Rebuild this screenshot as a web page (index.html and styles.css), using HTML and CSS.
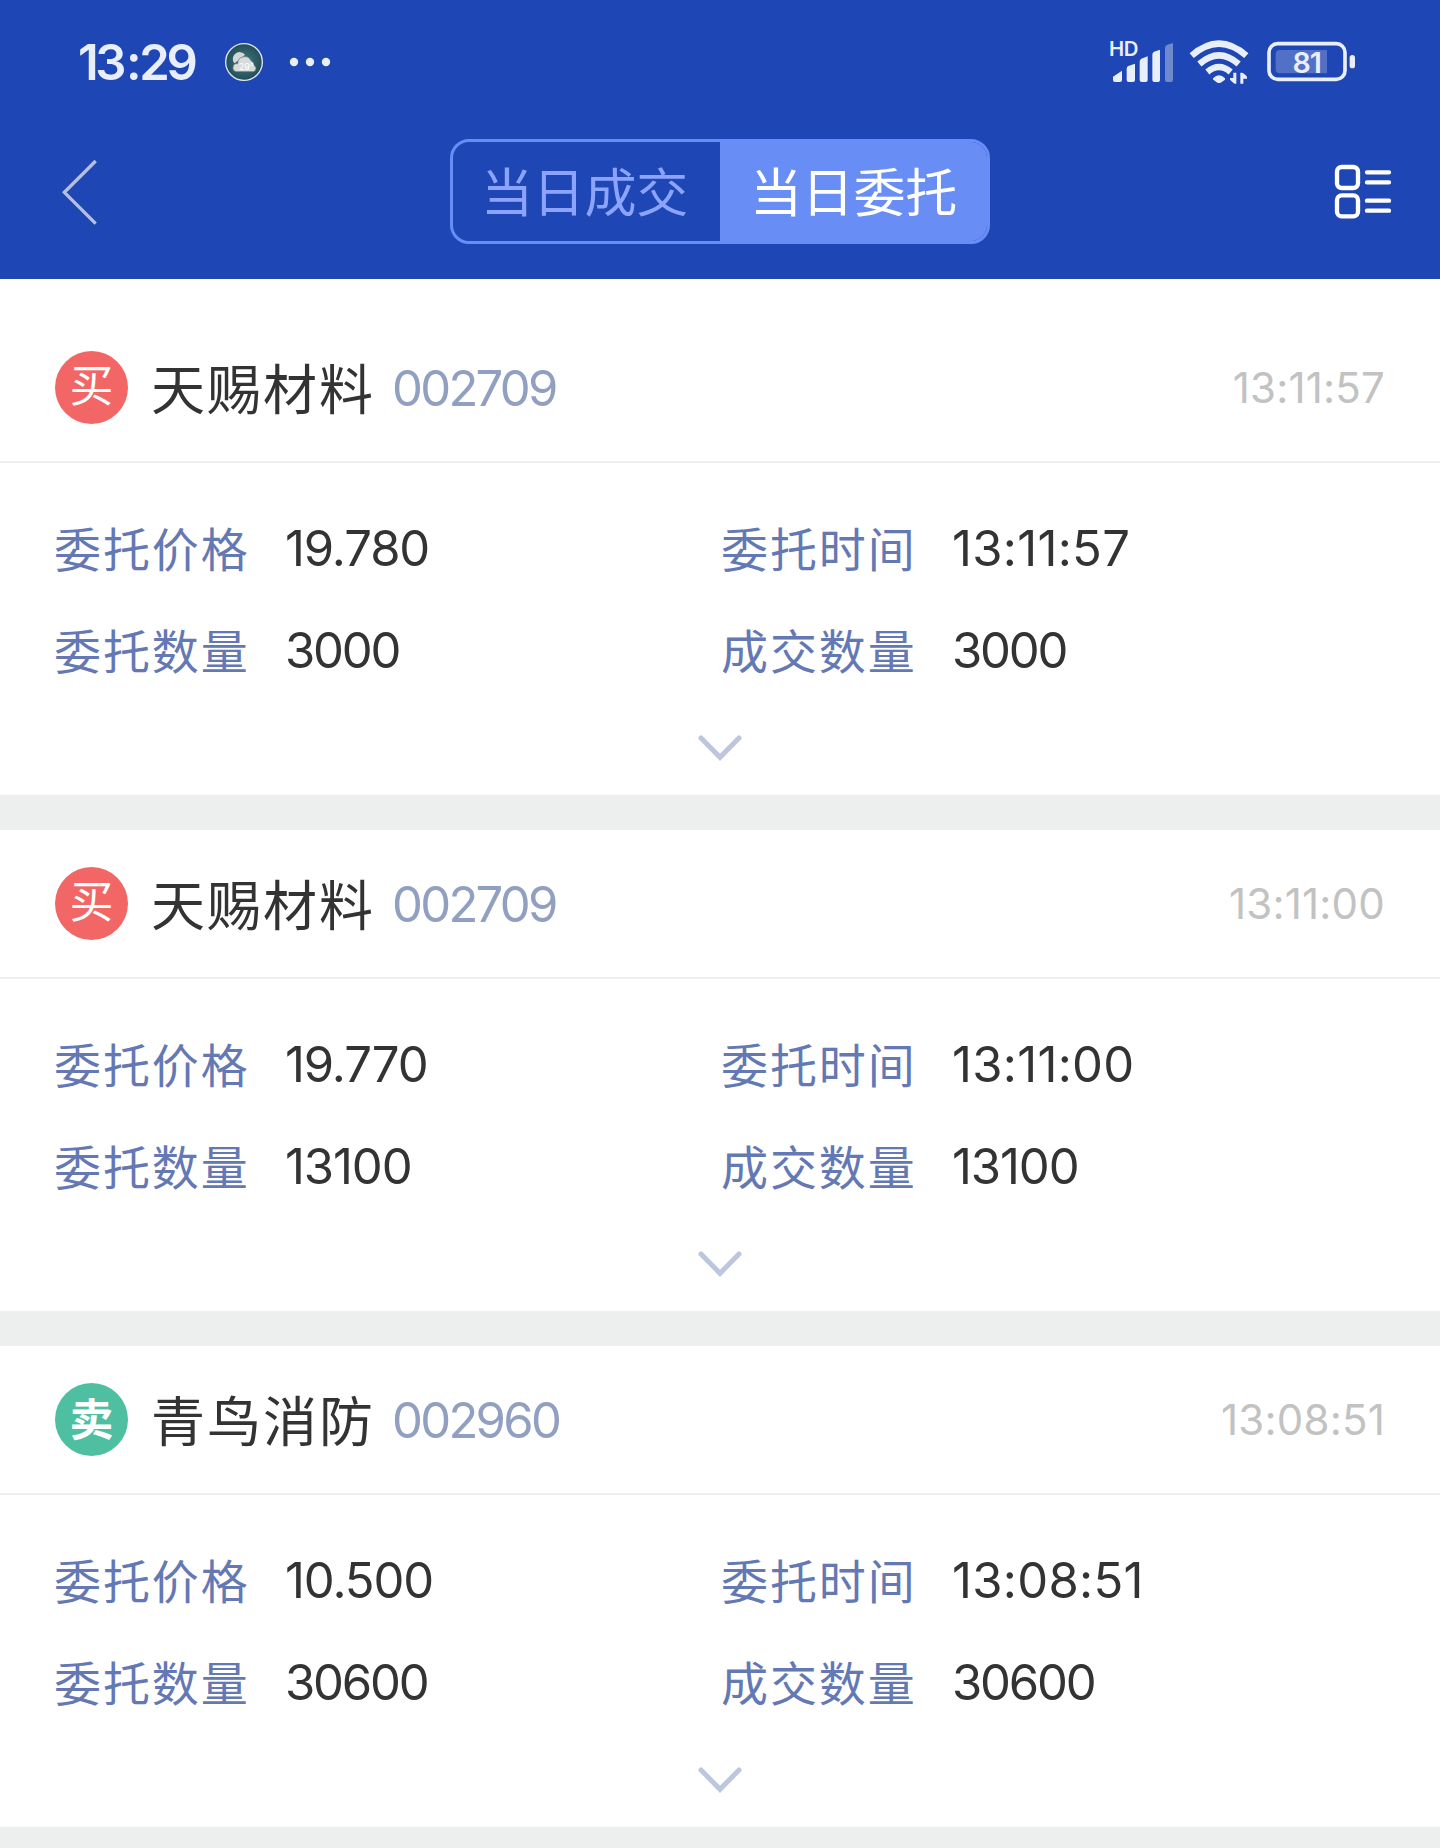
FILE: index.html
```
<!DOCTYPE html>
<html lang="zh-CN">

<head>
    <meta charset="UTF-8">
    <meta name="viewport" content="width=device-width, initial-scale=1.0">
    <title>当日委托</title>
    <link rel="stylesheet" href="styles.css">
</head>

<body>
    <header class="header">
        <!-- Status Bar -->
        <div class="status-bar">
            <div class="status-left">
                <span class="clock">13<span class="colon">:</span>29</span>
                <svg class="weather" viewBox="0 0 120 120">
                    <defs>
                        <radialGradient id="sky">
                            <stop offset="0" stop-color="#47787c" />
                            <stop offset="1" stop-color="#234e58" />
                        </radialGradient>
                    </defs>
                    <circle cx="60" cy="60" r="55" fill="url(#sky)" stroke="#dfe6ee" stroke-width="4" />
                    <path d="M31 64a18 18 0 1 1 32-26l-12 12z" fill="#d5d8d8" />
                    <path d="M37 89a12 12 0 0 1 4-24a21 21 0 0 1 40-9a15 15 0 0 1 9 14a10 10 0 0 1-2 19z" fill="#d9dbdb" stroke="#4c7377" stroke-width="2" />
                    <text x="44" y="85" class="weather-temp">29°</text>
                </svg>
                <svg class="dots" viewBox="0 0 132 30" fill="#e9eefb">
                    <circle cx="18" cy="15" r="12.5" />
                    <circle cx="66" cy="15" r="12.5" />
                    <circle cx="114" cy="15" r="12.5" />
                </svg>
            </div>
            <svg class="status-icons" viewBox="0 0 870 270" fill="#e9eefb">
                <!-- Signal -->
                <text x="57" y="108" class="hd">HD</text>
                <path d="M69 170l27-18v28q0 6-6 6H75q-6 0-6-6z" />
                <path d="M110 146q0-6 5-8l20-7v49q0 6-6 6h-13q-6 0-6-6z" />
                <path d="M149 125q0-6 5-9l19-7v71q0 6-6 6h-12q-6 0-6-6z" />
                <path d="M187 104q0-6 5-9l18-6v91q0 6-6 6h-11q-6 0-6-6z" />
                <path d="M225 84q0-6 5-9l19-6v111q0 6-6 6h-12q-6 0-6-6z" opacity=".4" />
                <!-- Wifi -->
                <g fill="none" stroke="#e9eefb" stroke-width="19">
                    <path d="M305 107q82-72 164 0" />
                    <path d="M328 132q59-52 118 0" />
                    <path d="M352 156q35-30 70 0" />
                </g>
                <path d="M369 175q18-18 36 0q1 3-1 5l-12 8q-5 2-10 0l-12-9q-2-2-1-4z" />
                <path d="M430 158l9 0v33h-5q-8-5-14-12v-5h10zM451 191V158h6q9 5 14 12v6h-11v15z" />
                <!-- Battery -->
                <rect x="537" y="71" width="228" height="107" rx="26" fill="none" stroke="#e9eefb" stroke-width="11" />
                <path d="M570 90h141v70H570q-13 0-13-13v-44q0-13 13-13z" opacity=".26" />
                <rect x="779" y="105" width="16" height="40" rx="8" />
                <text x="650" y="158" class="battery-level">81</text>
            </svg>
        </div>

        <!-- Navigation -->
        <div class="nav">
            <svg class="back" viewBox="60 51 120 210">
                <path d="M167 63L73 157L167 251" fill="none" stroke="#b4bfe2" stroke-width="10" />
            </svg>
            <div class="tabs">
                <div class="tab">当日成交</div>
                <div class="tab active">当日委托</div>
            </div>
            <svg class="menu" viewBox="72 72 174 165" fill="none" stroke="#fff" stroke-linecap="round">
                <rect x="81" y="81" width="63" height="63" rx="14" stroke-width="13" />
                <rect x="81" y="166" width="63" height="63" rx="14" stroke-width="13" />
                <path d="M171 97h66M171 127h66M171 182h66M171 212h66" stroke-width="13" />
            </svg>
        </div>
    </header>

    <!-- Order List -->
    <main class="orders">
        <section class="order">
            <div class="order-head">
                <span class="badge buy">买</span>
                <span class="name">天赐材料</span>
                <span class="code">002709</span>
                <span class="time">13:11:57</span>
            </div>
            <div class="order-body">
                <div class="field"><span class="label">委托价格</span><span class="value price">19.780</span></div>
                <div class="field"><span class="label">委托时间</span><span class="value">13:11:57</span></div>
                <div class="field"><span class="label">委托数量</span><span class="value amount">3000</span></div>
                <div class="field"><span class="label">成交数量</span><span class="value amount">3000</span></div>
            </div>
            <div class="expand">
                <svg class="chevron" viewBox="0 0 132 84"><path d="M9 12L66 70L123 12" /></svg>
            </div>
        </section>

        <section class="order">
            <div class="order-head">
                <span class="badge buy">买</span>
                <span class="name">天赐材料</span>
                <span class="code">002709</span>
                <span class="time">13:11:00</span>
            </div>
            <div class="order-body">
                <div class="field"><span class="label">委托价格</span><span class="value price">19.770</span></div>
                <div class="field"><span class="label">委托时间</span><span class="value">13:11:00</span></div>
                <div class="field"><span class="label">委托数量</span><span class="value price">13100</span></div>
                <div class="field"><span class="label">成交数量</span><span class="value price">13100</span></div>
            </div>
            <div class="expand">
                <svg class="chevron" viewBox="0 0 132 84"><path d="M9 12L66 70L123 12" /></svg>
            </div>
        </section>

        <section class="order">
            <div class="order-head">
                <span class="badge sell">卖</span>
                <span class="name">青鸟消防</span>
                <span class="code">002960</span>
                <span class="time">13:08:51</span>
            </div>
            <div class="order-body">
                <div class="field"><span class="label">委托价格</span><span class="value price">10.500</span></div>
                <div class="field"><span class="label">委托时间</span><span class="value">13:08:51</span></div>
                <div class="field"><span class="label">委托数量</span><span class="value amount">30600</span></div>
                <div class="field"><span class="label">成交数量</span><span class="value amount">30600</span></div>
            </div>
            <div class="expand">
                <svg class="chevron" viewBox="0 0 132 84"><path d="M9 12L66 70L123 12" /></svg>
            </div>
        </section>
    </main>
</body>

</html>
```
FILE: styles.css
```
/* General Styles */
* {
    box-sizing: border-box;
}

body {
    margin: 0;
    height: 1848px;
    overflow: hidden;
    background-color: #edefee;
    color: #333;
    font-family: Inter, "Noto Sans CJK SC", sans-serif;
}

/* Header */
.header {
    height: 279px;
    background-color: #1e46b4;
}

.status-bar {
    height: 104px;
    display: flex;
    justify-content: space-between;
    align-items: center;
    padding: 20px 60px 0 78px;
}

.status-left {
    display: flex;
    align-items: center;
}

.clock {
    width: 146px;
    padding-top: 2px;
    color: #e9eefb;
    font-size: 49px;
    line-height: 82px;
    font-weight: 600;
    letter-spacing: -3.4px;
}

.colon {
    margin: 0 1px 0 3px;
}

.weather {
    width: 40px;
    height: 40px;
    margin-right: 24px;
}

.weather-temp {
    font-size: 27px;
    fill: #fff;
}

.dots {
    width: 44px;
    height: 10px;
}

.status-icons {
    width: 290px;
    height: 90px;
    margin-top: 6px;
}

.hd {
    font-size: 61px;
    font-weight: 600;
    letter-spacing: -1px;
}

.battery-level {
    font-size: 86px;
    font-weight: 600;
    text-anchor: middle;
    letter-spacing: -3px;
}

.nav {
    height: 175px;
    display: flex;
    justify-content: space-between;
    align-items: center;
    padding: 0 48px 0 60px;
}

.back {
    width: 40px;
    height: 70px;
}

.menu {
    width: 58px;
    height: 55px;
}

.tabs {
    display: flex;
    width: 540px;
    height: 105px;
    margin-left: 6px;
    border: 3px solid #688df5;
    border-radius: 19px;
    overflow: hidden;
}

.tab {
    width: 267px;
    padding-right: 4px;
    text-align: center;
    color: #8ca4ff;
    font-size: 52px;
    line-height: 103px;
    letter-spacing: -0.2px;
}

.tab.active {
    padding-right: 0;
    background-color: #688df5;
    color: #fff;
}

/* Order List */
.orders {
    display: flex;
    flex-direction: column;
    gap: 35px;
    padding-top: 35px;
    background: linear-gradient(#fff 35px, #edefee 35px);
}

.order {
    height: 481px;
    background-color: #fff;
}

.order-head {
    display: flex;
    align-items: center;
    height: 149px;
    padding: 0 55px;
    border-bottom: 2px solid #efefef;
}

.badge {
    width: 73px;
    height: 73px;
    margin-right: 23px;
    border-radius: 50%;
    color: #fff;
    font-size: 44px;
    line-height: 71px;
    text-align: center;
}

.buy {
    background-color: #f36666;
}

.sell {
    background-color: #4ec0a1;
    font-weight: 700;
    line-height: 74px;
}

.name {
    padding-bottom: 2px;
    font-size: 54px;
    letter-spacing: 2px;
}

.code {
    margin-left: 17px;
    padding-top: 1px;
    color: #919fc0;
    font-size: 49px;
    letter-spacing: -2.7px;
}

.time {
    margin-left: auto;
    color: #c2c2c2;
    font-size: 42px;
    letter-spacing: 0.2px;
}

.order-body {
    display: grid;
    grid-template-columns: 667px 1fr;
    grid-auto-rows: 102px;
    padding: 35px 0 0 54px;
}

.field {
    display: flex;
    align-items: center;
}

.label {
    width: 231px;
    padding-bottom: 5px;
    color: #6478b4;
    font-size: 47px;
    letter-spacing: 1.9px;
}

.value {
    padding-bottom: 1px;
    font-size: 49px;
    letter-spacing: 0.3px;
}

.price {
    letter-spacing: -1.1px;
}

.amount {
    letter-spacing: -2.2px;
}

.expand {
    display: flex;
    justify-content: center;
    padding-top: 32px;
}

.chevron {
    width: 44px;
    height: 28px;
    fill: none;
    stroke: #bcc7de;
    stroke-width: 15;
    stroke-linecap: round;
}
```
